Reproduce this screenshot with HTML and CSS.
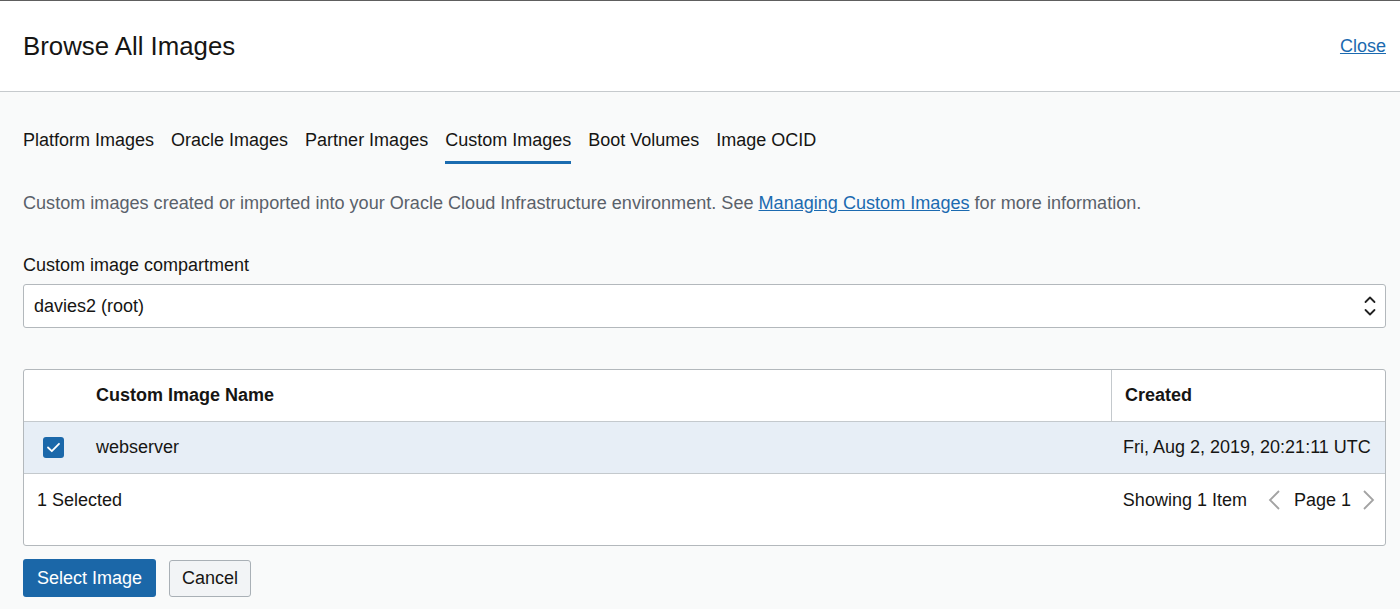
FILE: index.html
```html
<!DOCTYPE html>
<html>
<head>
<meta charset="utf-8">
<link rel="stylesheet" href="styles.css">
</head>
<body>
<header class="header">
  <h1 class="title">Browse All Images</h1>
  <a class="close" href="#">Close</a>
</header>
<main class="content">
  <nav class="tabs">
    <span class="tab">Platform Images</span>
    <span class="tab">Oracle Images</span>
    <span class="tab">Partner Images</span>
    <span class="tab active">Custom Images</span>
    <span class="tab">Boot Volumes</span>
    <span class="tab">Image OCID</span>
  </nav>
  <p class="desc">Custom images created or imported into your Oracle Cloud Infrastructure environment. See <a href="#" class="link">Managing Custom Images</a> for more information.</p>
  <label class="label">Custom image compartment</label>
  <div class="select">
    <span>davies2 (root)</span>
    <svg class="updown" width="12" height="22" viewBox="0 0 12 22"><path d="M1.5 7 L6 2.5 L10.5 7" fill="none" stroke="#222" stroke-width="1.8" stroke-linecap="round" stroke-linejoin="round"/><path d="M1.5 15 L6 19.5 L10.5 15" fill="none" stroke="#222" stroke-width="1.8" stroke-linecap="round" stroke-linejoin="round"/></svg>
  </div>
  <div class="table">
    <div class="thead">
      <div class="cell chk"></div>
      <div class="cell name">Custom Image Name</div>
      <div class="cell created">Created</div>
    </div>
    <div class="trow selected">
      <div class="cell chk"><span class="checkbox"><svg width="21" height="21" viewBox="0 0 21 21"><path d="M5 10.5 L8.8 14.2 L16 6.8" fill="none" stroke="#fff" stroke-width="1.8" stroke-linecap="round" stroke-linejoin="round"/></svg></span></div>
      <div class="cell name">webserver</div>
      <div class="cell date">Fri, Aug 2, 2019, 20:21:11 UTC</div>
    </div>
    <div class="tfoot">
      <span>1 Selected</span>
      <div class="pager">
        <span>Showing 1 Item</span>
        <svg class="chev prev" width="14" height="22" viewBox="0 0 14 22"><path d="M12 2 L3 11 L12 20" fill="none" stroke="#a3a3a3" stroke-width="1.8"/></svg>
        <span>Page 1</span>
        <svg class="chev next" width="14" height="22" viewBox="0 0 14 22"><path d="M2 2 L11 11 L2 20" fill="none" stroke="#a3a3a3" stroke-width="1.8"/></svg>
      </div>
    </div>
  </div>
  <div class="actions">
    <button class="btn primary">Select Image</button>
    <button class="btn secondary">Cancel</button>
  </div>
</main>
</body>
</html>
```
FILE: styles.css
```css
html, body {
  margin: 0;
  padding: 0;
  background: #f9fafa;
  font-family: "Liberation Sans", Arial, sans-serif;
  color: #161513;
  font-size: 18px;
}
.header {
  height: 90px;
  background: #fff;
  border-top: 1px solid #5e5e5e;
  border-bottom: 1px solid #c6cacd;
  display: flex;
  align-items: center;
  justify-content: space-between;
  padding: 0 14px 0 23px;
}
.title {
  margin: 0;
  font-size: 25.8px;
  font-weight: normal;
  color: #161513;
  line-height: 30px;
}
.close {
  color: #1b6ab0;
  font-size: 18px;
  text-decoration: underline;
}
.content {
  padding: 0 14px 0 23px;
}
.tabs {
  display: flex;
  gap: 17px;
  margin-top: 37px;
}
.tab {
  line-height: 22px;
  padding-bottom: 10px;
  border-bottom: 3px solid transparent;
  color: #161513;
}
.tab.active {
  border-bottom-color: #1b6cb0;
}
.desc {
  margin: 28px 0 0;
  line-height: 22px;
  color: #59616a;
  font-size: 18.08px;
}
.link {
  color: #1b6ab0;
  text-decoration: underline;
}
.label {
  display: block;
  margin-top: 40px;
  line-height: 22px;
  color: #161513;
}
.select {
  margin-top: 8px;
  height: 42px;
  border: 1px solid #b3b8bc;
  border-radius: 3px;
  background: #fff;
  display: flex;
  align-items: center;
  justify-content: space-between;
  padding: 0 9px 0 10px;
}
.updown {
  display: block;
}
.table {
  margin-top: 41px;
  border: 1px solid #b3b8bc;
  border-radius: 3px;
  background: #fff;
}
.thead, .trow {
  display: grid;
  grid-template-columns: 60px 1fr 274px;
  height: 51px;
  border-bottom: 1px solid #c4c9cd;
}
.cell {
  display: flex;
  align-items: center;
}
.thead .cell {
  font-weight: bold;
}
.name {
  padding-left: 12px;
}
.created {
  border-left: 1px solid #c4c9cd;
  padding-left: 13px;
}
.date {
  padding-left: 12px;
}
.trow.selected {
  background: #e7eef6;
}
.chk {
  padding-left: 19px;
}
.checkbox {
  width: 21px;
  height: 21px;
  border-radius: 3px;
  background: #1b68aa;
  display: block;
}
.checkbox svg {
  display: block;
}
.tfoot {
  height: 71px;
  display: flex;
  justify-content: space-between;
  align-items: flex-start;
  padding: 15px 9px 0 13px;
  box-sizing: border-box;
  line-height: 22px;
}
.pager {
  display: flex;
  align-items: center;
}
.pager .chev {
  display: block;
}
.pager .prev {
  margin: 0 13px 0 20px;
}
.pager .next {
  margin: 0 0 0 11px;
}
.actions {
  display: flex;
  gap: 13px;
  margin-top: 13px;
  align-items: center;
}
.btn {
  font-family: "Liberation Sans", Arial, sans-serif;
  font-size: 18px;
  border-radius: 3px;
  cursor: pointer;
}
.primary {
  height: 38px;
  width: 133px;
  background: #1b67a8;
  color: #fff;
  border: none;
}
.secondary {
  height: 37px;
  width: 82px;
  background: #f2f4f6;
  color: #161513;
  border: 1px solid #a9b0b6;
}
```
